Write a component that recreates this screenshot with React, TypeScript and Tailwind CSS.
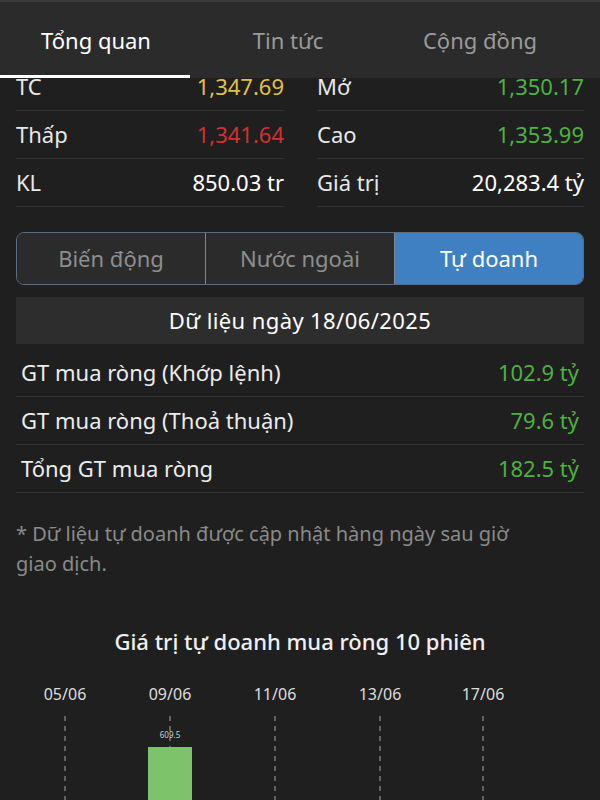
import React from "react";

const stats = [
  { l: "TC", v: "1,347.69", c: "text-[#e3bf4a]", l2: "Mở", v2: "1,350.17", c2: "text-[#4fb043]" },
  { l: "Thấp", v: "1,341.64", c: "text-[#cf3131]", l2: "Cao", v2: "1,353.99", c2: "text-[#4fb043]" },
  { l: "KL", v: "850.03 tr", c: "text-white", l2: "Giá trị", v2: "20,283.4 tỷ", c2: "text-white" },
];

const rows = [
  { l: "GT mua ròng (Khớp lệnh)", v: "102.9 tỷ" },
  { l: "GT mua ròng (Thoả thuận)", v: "79.6 tỷ" },
  { l: "Tổng GT mua ròng", v: "182.5 tỷ" },
];

const dates = [
  { x: 65, t: "05/06" },
  { x: 170, t: "09/06" },
  { x: 275, t: "11/06" },
  { x: 380, t: "13/06" },
  { x: 483, t: "17/06" },
];

export default function App() {
  return (
    <div
      className="w-[600px] h-[800px] overflow-hidden bg-[#1f1f1f] text-white"
      style={{ fontFamily: "'Noto Sans', sans-serif" }}
    >
      <div className="relative z-10 h-[78px] bg-[#2b2b2b] border-t-2 border-[#3a3a3a] flex">
        <div className="relative w-[192px] flex items-center justify-center text-[22px] text-white">
          Tổng quan
          <div className="absolute left-0 bottom-0 h-[3px] w-[190px] bg-white" />
        </div>
        <div className="w-[192px] flex items-center justify-center text-[22px] text-[#9a9a9a]">Tin tức</div>
        <div className="w-[192px] flex items-center justify-center text-[22px] text-[#9a9a9a]">Cộng đồng</div>
      </div>

      <div className="-mt-[15px] px-4 flex gap-[33px]">
        <div className="w-[268px]">
          {stats.map((s) => (
            <div key={s.l} className="h-[48px] flex items-center justify-between border-b border-[#333333] text-[22px]">
              <span className="text-[#e8e8e8]">{s.l}</span>
              <span className={s.c}>{s.v}</span>
            </div>
          ))}
        </div>
        <div className="w-[267px]">
          {stats.map((s) => (
            <div key={s.l2} className="h-[48px] flex items-center justify-between border-b border-[#333333] text-[22px]">
              <span className="text-[#e8e8e8]">{s.l2}</span>
              <span className={s.c2}>{s.v2}</span>
            </div>
          ))}
        </div>
      </div>

      <div className="mx-4 mt-[25px] h-[53px] flex rounded-[8px] border-[1.5px] border-[#5b6b82] overflow-hidden text-[22px]">
        <div className="flex-1 flex items-center justify-center bg-[#2b2b2b] text-[#8e8e8e] border-r-[1.5px] border-[#7d8696]">Biến động</div>
        <div className="flex-1 flex items-center justify-center bg-[#2b2b2b] text-[#8e8e8e] border-r-[1.5px] border-[#7d8696]">Nước ngoài</div>
        <div className="flex-1 flex items-center justify-center bg-[#3f80c2] text-white">Tự doanh</div>
      </div>

      <div className="mx-4 mt-[12px] h-[47px] bg-[#2d2d2d] flex items-center justify-center text-[22px] tracking-[0.4px] text-white">
        Dữ liệu ngày 18/06/2025
      </div>

      <div className="mx-4 mt-[5px]">
        {rows.map((r) => (
          <div key={r.l} className="h-[48px] flex items-center justify-between px-[5px] border-b border-[#333333] text-[22px]">
            <span className="text-[#ececec]">{r.l}</span>
            <span className="text-[#4fb043]">{r.v}</span>
          </div>
        ))}
      </div>

      <p className="mx-4 mt-[26px] text-[20px] leading-[30px] text-[#8a8a8a]">
        * Dữ liệu tự doanh được cập nhật hàng ngày sau giờ
        <br />
        giao dịch.
      </p>

      <div className="mt-[46px] text-center text-[22px] font-medium text-[#f0f0f0]">
        Giá trị tự doanh mua ròng 10 phiên
      </div>

      <svg width="600" height="130" className="block mt-[16px]">
        {dates.map((d) => (
          <g key={d.t}>
            <text x={d.x} y={26} textAnchor="middle" fontSize="16" fill="#dddddd" fontFamily="'Noto Sans', sans-serif">
              {d.t}
            </text>
            <line x1={d.x} y1={42} x2={d.x} y2={130} stroke="#7a7a7a" strokeWidth="1.5" strokeDasharray="5 5" />
          </g>
        ))}
        <rect x={148} y={73} width={44} height={57} fill="#7dc36b" />
        <text x={170} y={64} textAnchor="middle" fontSize="8" fill="#cfcfcf" fontFamily="'Noto Sans', sans-serif">
          609.5
        </text>
      </svg>
    </div>
  );
}
